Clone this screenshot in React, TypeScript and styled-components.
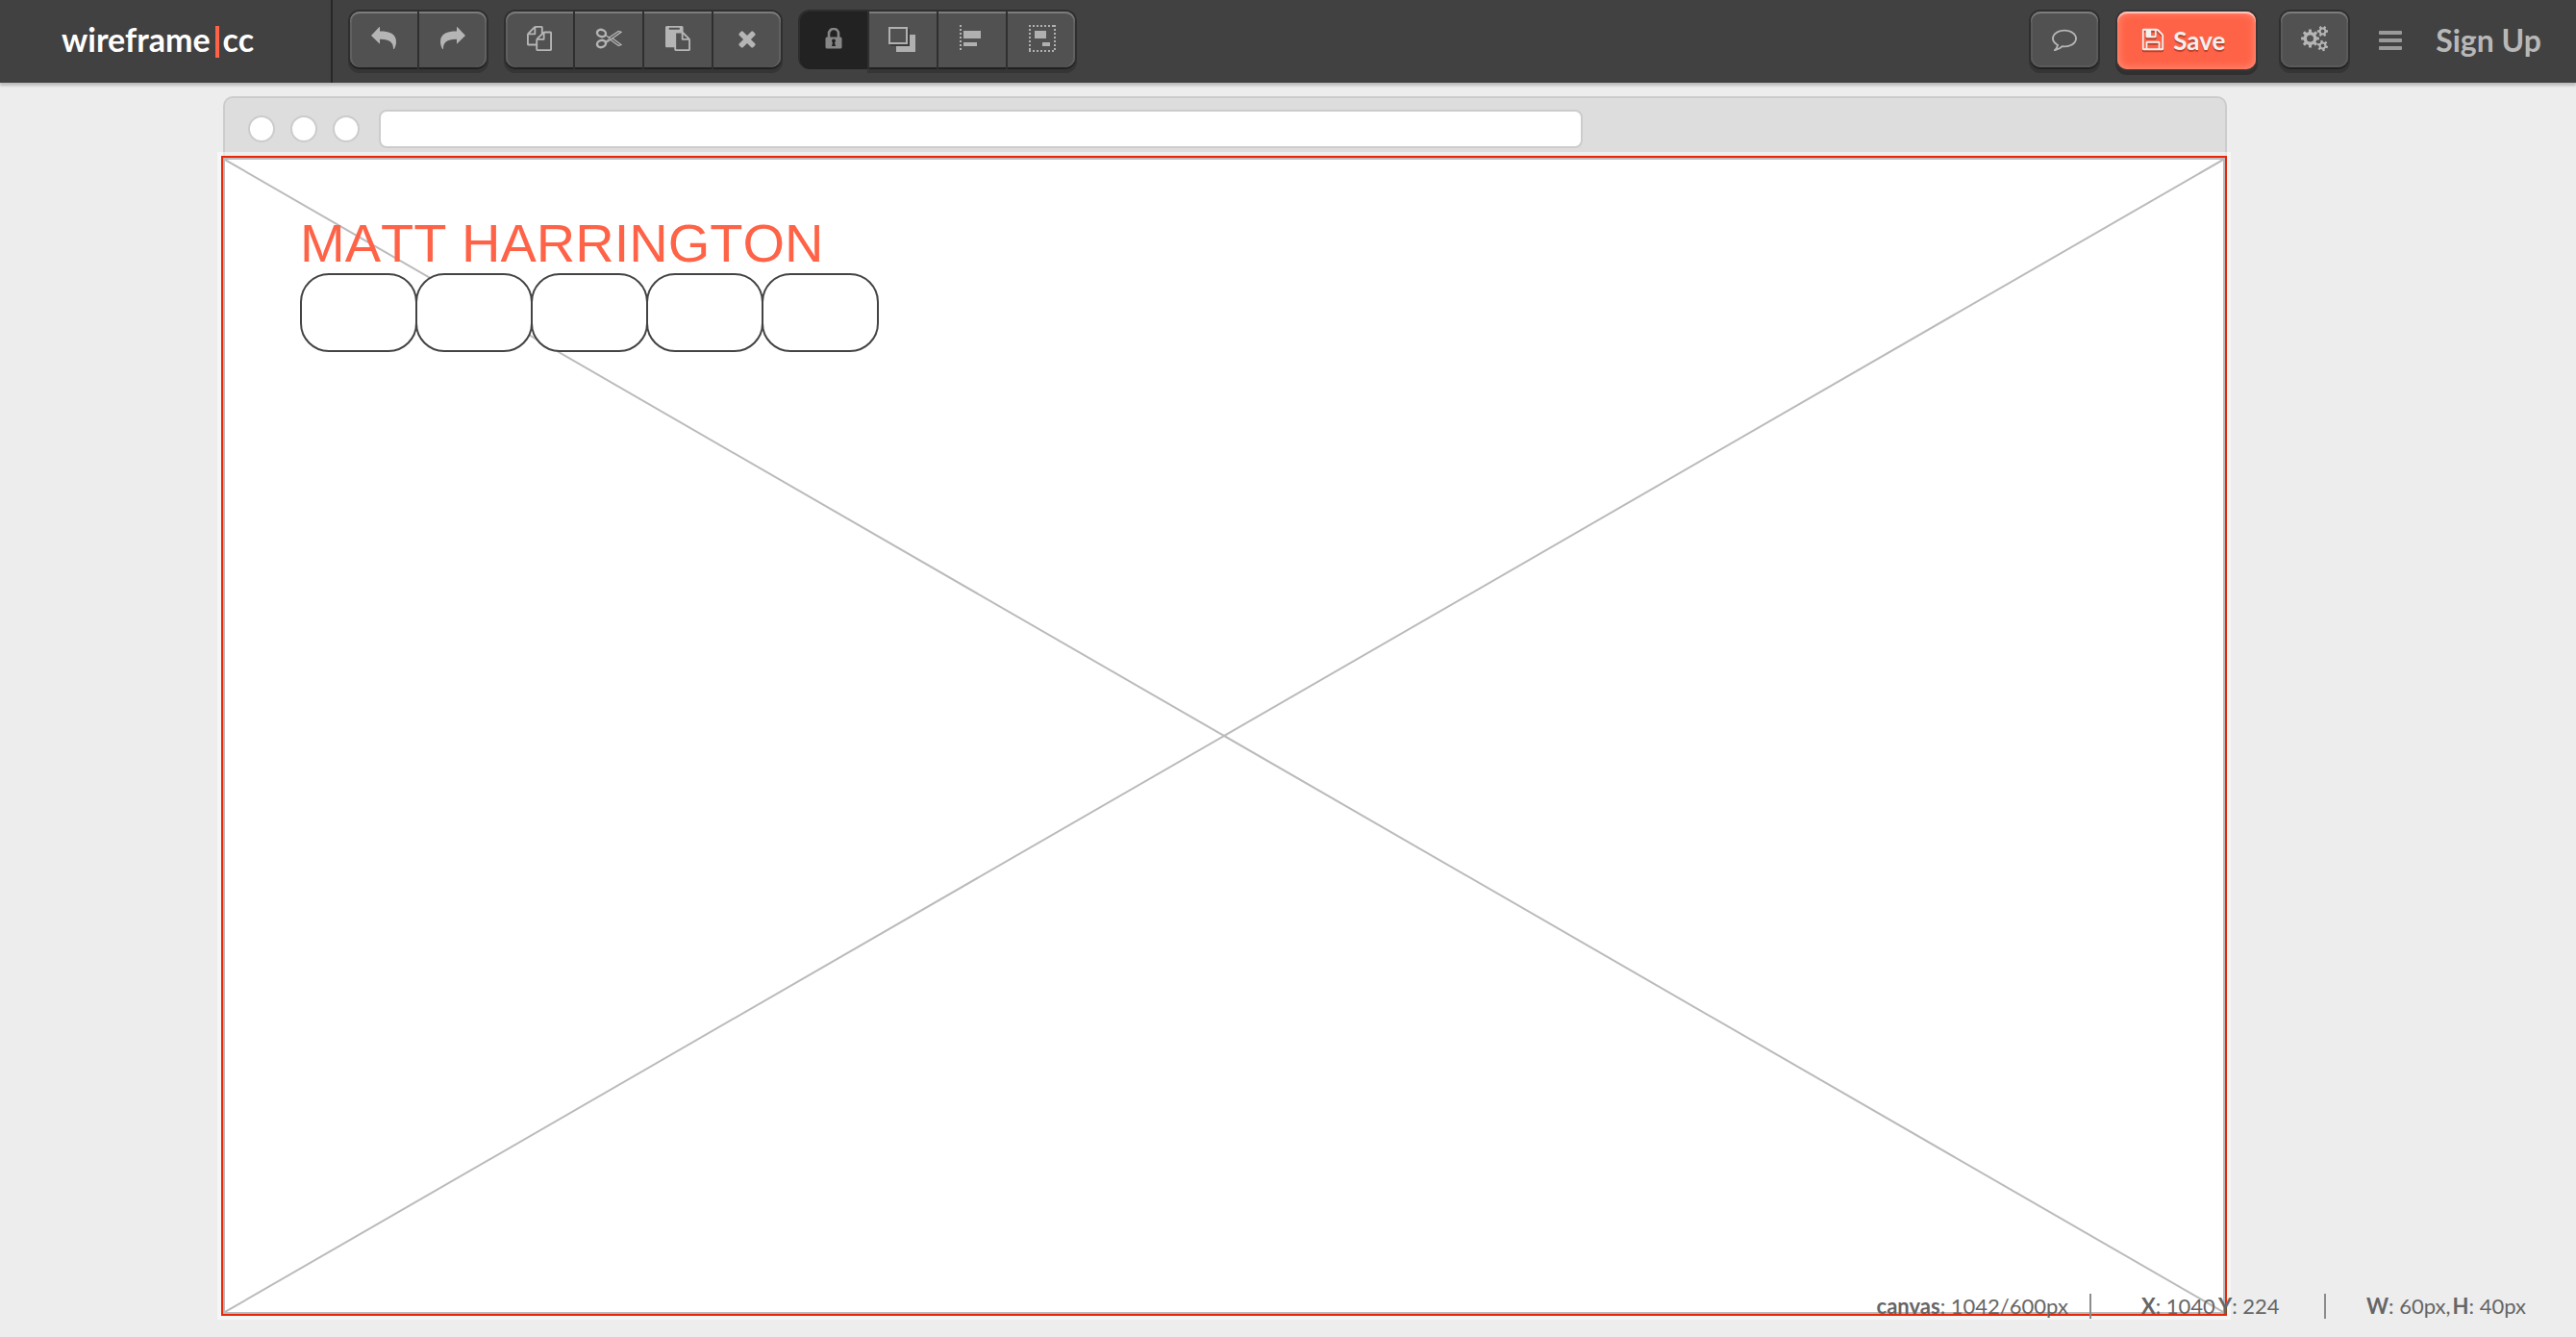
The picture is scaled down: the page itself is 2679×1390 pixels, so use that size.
import React from "react";
import styled, { createGlobalStyle, css } from "styled-components";

const GlobalStyle = createGlobalStyle`
  *, *::before, *::after { box-sizing: border-box; }
  body {
    margin: 0;
    background: #ededed;
    font-family: Lato, "Liberation Sans", sans-serif;
  }
`;

const Page = styled.div`
  position: relative;
  min-height: 100vh;
`;

const Header = styled.header`
  position: relative;
  display: flex;
  align-items: flex-start;
  height: 86px;
  background: #414141;
  box-shadow: 0 2px 2px #bcbcbc, 0 4px 2px #d4d4d4;
`;

const Brand = styled.a`
  display: flex;
  align-items: center;
  width: 346px;
  height: 86px;
  padding: 0 0 4px 64px;
  border-right: 2px solid #272727;
  color: #fff;
  font-size: 34px;
  font-weight: 700;
  line-height: 40px;
  text-decoration: none;
`;

const BrandBar = styled.span`
  width: 4px;
  height: 33px;
  margin: 4px 4px 0 5px;
  background: #ff6347;
`;

const Toolbar = styled.nav`
  display: flex;
  flex: 1;
  gap: 20px;
  padding: 12px 18px;
`;

const Group = styled.div`
  display: flex;
  gap: 2px;
`;

const Account = styled.div`
  display: flex;
  align-items: flex-start;
  padding: 12px 36px 0 0;
`;

const raisedOuter = "0 2px 0 #212121, 0 0 0 2px #2f2f2f, 0 4px 0 2px #353535";

const raised = css`
  background: #515151;
  box-shadow: inset 0 2px 0 #7c7c7c, ${raisedOuter};
`;

const pressed = css`
  background: #222;
  box-shadow: 0 2px 0 #222, 0 0 0 2px #2d2d2d;
`;

const ToolButton = styled.button<{ $active?: boolean }>`
  display: flex;
  align-items: center;
  justify-content: center;
  width: 70px;
  height: 58px;
  padding: 0 0 2px;
  border: 0;
  color: ${(p) => (p.$active ? "#868686" : "#b5b5b5")};
  ${(p) => (p.$active ? pressed : raised)}

  ${Group} > &:first-child {
    border-radius: 10px 0 0 10px;
    ${(p) =>
      !p.$active &&
      css`
        box-shadow: inset 0 2px 0 #7c7c7c, inset 2px 0 0 #606060, ${raisedOuter};
      `}
  }
  ${Group} > &:last-child {
    border-radius: 0 10px 10px 0;
    box-shadow: inset 0 2px 0 #7c7c7c, inset -2px 0 0 #606060, ${raisedOuter};
  }
  ${Account} > & {
    border-radius: 10px;
    box-shadow: inset 0 2px 0 #7c7c7c, inset 0 0 0 2px #5a5a5a, ${raisedOuter};
  }
`;

const SaveButton = styled.button`
  display: flex;
  align-items: center;
  justify-content: center;
  gap: 8px;
  width: 144px;
  height: 60px;
  margin: 0 26px 0 20px;
  padding: 0 8px 0 0;
  border: 0;
  border-radius: 10px;
  background: #ff6347;
  box-shadow: inset 0 2px 1px #ffc9bf, inset 0 0 8px 1px #ff8f7a,
    0 0 0 2px #363636, 0 4px 0 2px #303030;
  color: #f4f0ef;
  font: 700 26px/32px Lato, "Liberation Sans", sans-serif;
  text-shadow: 0 2px 1px #b8432d;

  svg {
    margin-bottom: 2px;
    filter: drop-shadow(0 2px 0 #b8432d);
  }
`;

const MenuButton = styled.button`
  display: flex;
  flex-direction: column;
  gap: 4px;
  width: 24px;
  margin: 20px 35px 0 32px;
  padding: 0;
  border: 0;
  background: none;
`;

const MenuLine = styled.span`
  height: 4px;
  border-radius: 1px;
  background: #9a9a9a;
`;

const SignUp = styled.a`
  padding-top: 10px;
  color: #b8b8b8;
  font-size: 32px;
  font-weight: 700;
  line-height: 40px;
  text-decoration: none;
`;

const Workspace = styled.main`
  padding: 14px 363px 18px 230px;
`;

const Chrome = styled.div`
  display: flex;
  align-items: center;
  height: 62px;
  margin-left: 2px;
  padding: 4px 24px 0;
  border: 2px solid #ccc;
  border-bottom: 0;
  border-radius: 10px 10px 0 0;
  background: #ddd;
`;

const Dots = styled.div`
  display: flex;
  gap: 16px;
  margin-right: 20px;
`;

const Dot = styled.span`
  width: 28px;
  height: 28px;
  border: 2px solid #ccc;
  border-radius: 50%;
  background: #fff;
`;

const AddressBar = styled.input`
  flex: 0 0 auto;
  width: 61.6%;
  height: 40px;
  padding: 0 12px;
  border: 2px solid #ccc;
  border-radius: 8px;
  background: #fff;
  font: 400 22px/32px Lato, sans-serif;
`;

const Canvas = styled.section`
  position: relative;
  min-height: 1206px;
  border: 2px solid #e8260a;
  background: #fff;
  box-shadow: 0 0 0 4px rgba(255, 255, 255, 0.5);
`;

const Cross = styled.svg`
  position: absolute;
  inset: 0;
  width: 100%;
  height: 100%;
  border: 2px solid #bbb;
`;

const NameHeading = styled.h1`
  position: absolute;
  top: 57px;
  left: 80px;
  margin: 0;
  color: #ff6347;
  font: 400 56px/64px "Liberation Sans", Arial, sans-serif;
  font-kerning: none;
  white-space: nowrap;
`;

const BoxRow = styled.div`
  position: absolute;
  top: 120px;
  left: 80px;
  display: flex;
`;

const Box = styled.div`
  width: 122px;
  height: 82px;
  border: 2px solid #444;
  border-radius: 30px;
  background: #fff;

  & + & {
    margin-left: -2px;
  }
`;

const StatusBar = styled.footer`
  position: absolute;
  right: 52px;
  bottom: 16px;
  display: flex;
  align-items: center;
  color: #666;
  font-size: 22px;
  line-height: 32px;
  white-space: nowrap;
`;

const Stat = styled.span<{ $width?: number }>`
  width: ${(p) => (p.$width ? `${p.$width}px` : "auto")};
`;

const StatPair = styled.span`
  display: flex;
  gap: 2px;
`;

const Rule = styled.span<{ $before: number; $after: number }>`
  width: 2px;
  height: 26px;
  margin: 0 ${(p) => p.$after}px 0 ${(p) => p.$before}px;
  background: #8c8c8c;
`;

type GlyphProps = { size: number; d: string };

const Glyph = ({ size, d }: GlyphProps) => (
  <svg width={size} height={size} viewBox="0 0 1792 1792" fill="currentColor" aria-hidden="true">
    <path d={d} />
  </svg>
);

const glyphs = {
  copy: "M1696 384q40 0 68 28t28 68v1216q0 40-28 68t-68 28h-960q-40 0-68-28t-28-68v-288h-544q-40 0-68-28t-28-68v-672q0-40 20-88t48-76l408-408q28-28 76-48t88-20h416q40 0 68 28t28 68v328q68-40 128-40h416zm-544 213l-299 299h299v-299zm-640-384l-299 299h299v-299zm196 647l316-316v-416h-384v416q0 40-28 68t-68 28h-416v640h512v-256q0-40 20-88t48-76zm956 804v-1152h-384v416q0 40-28 68t-68 28h-416v640h896z",
  paste: "M768 1664h896v-640h-416q-40 0-68-28t-28-68v-416h-384v1152zm256-1440v-64q0-13-9.5-22.5t-22.5-9.5h-704q-13 0-22.5 9.5t-9.5 22.5v64q0 13 9.5 22.5t22.5 9.5h704q13 0 22.5-9.5t9.5-22.5zm256 672h299l-299-299v299zm512 128v672q0 40-28 68t-68 28h-960q-40 0-68-28t-28-68v-160h-544q-40 0-68-28t-28-68v-1344q0-40 28-68t68-28h1088q40 0 68 28t28 68v328q21 13 36 28l408 408q28 28 48 76t20 88z",
  close: "M1490 1322q0 40-28 68l-136 136q-28 28-68 28t-68-28l-294-294-294 294q-28 28-68 28t-68-28l-136-136q-28-28-28-68t28-68l294-294-294-294q-28-28-28-68t28-68l136-136q28-28 68-28t68 28l294 294 294-294q28-28 68-28t68 28l136 136q28 28 28 68t-28 68l-294 294 294 294q28 28 28 68z",
  save: "M512 1536h768v-384h-768v384zm896 0h128v-896q0-14-10-38.5t-20-34.5l-281-281q-10-10-34-20t-39-10v416q0 40-28 68t-68 28h-576q-40 0-68-28t-28-68v-416h-128v1280h128v-416q0-40 28-68t68-28h832q40 0 68 28t28 68v416zm-384-928v-320q0-13-9.5-22.5t-22.5-9.5h-192q-13 0-22.5 9.5t-9.5 22.5v320q0 13 9.5 22.5t22.5 9.5h192q13 0 22.5-9.5t9.5-22.5zm640 32v928q0 40-28 68t-68 28h-1344q-40 0-68-28t-28-68v-1344q0-40 28-68t68-28h928q40 0 88 20t76 48l280 280q28 28 48 76t20 88z",
  comment: "M896 384q-204 0-381.5 69.5t-282 187.5-104.5 255q0 112 71.5 213.5t201.5 175.5l87 50-27 96q-24 91-70 172 152-63 275-171l43-38 57 6q69 8 130 8 204 0 381.5-69.5t282-187.5 104.5-255-104.5-255-282-187.5-381.5-69.5zm896 512q0 174-120 321.5t-326 233-450 85.5q-70 0-145-8-198 175-460 242-49 14-114 22h-5q-15 0-27-10.5t-16-27.5v-1q-3-4-.5-12t2-10 4.5-9.5l6-9 7-8.5 8-9q7-8 31-34.5t34.5-38 31-39.5 32.5-51 27-59 26-76q-157-89-247.5-220t-90.5-281q0-130 71-248.5t191-204.5 286-136.5 348-50.5 348 50.5 286 136.5 191 204.5 71 248.5z",
};

const ReplyIcon = ({ flip }: { flip?: boolean }) => (
  <svg width="28" height="28" viewBox="0 0 28 28" fill="currentColor" aria-hidden="true">
    <path
      transform={flip ? "matrix(-1 0 0 1 28 0)" : undefined}
      d="M1 11 L9.5 2 Q10 1.700 10 2.500 V6.500 C20 6.500 27 9 27 17.500 C27 20.500 26 23 25 24.700 Q24.200 25.600 24 24.500 C24 18 20 14.500 10 14.700 V19 Q10 19.800 9.500 19.300 Z"
    />
  </svg>
);

const ScissorsIcon = () => (
  <svg width="28" height="24" viewBox="0 0 28 24" fill="none" stroke="currentColor" aria-hidden="true">
    <ellipse cx="6.500" cy="6.500" rx="4.600" ry="3.600" transform="rotate(18 6.500 6.500)" strokeWidth="2.400" />
    <ellipse cx="6.500" cy="17.500" rx="4.600" ry="3.600" transform="rotate(-18 6.500 17.500)" strokeWidth="2.400" />
    <path d="M10.500 8.500 L14.500 11 L24.300 4.500 L27 5.300 L12 16" strokeWidth="1.300" />
    <path d="M10.500 15.500 L14 13.200 M16 13.500 L24.300 19.500 L27 18.500 L17.500 11.500" strokeWidth="1.300" />
    <circle cx="14.800" cy="12.300" r="1" strokeWidth="1" />
  </svg>
);

const LockIcon = () => (
  <svg width="18" height="22" viewBox="0 0 18 22" aria-hidden="true">
    <path d="M4 11 V6 a5 5 0 0 1 10 0 V11" fill="none" stroke="currentColor" strokeWidth="2.600" />
    <rect x="0.500" y="9.500" width="17" height="12" rx="1.500" fill="currentColor" />
    <circle cx="9" cy="13.500" r="2" fill="#222" />
    <path d="M8.300 14 H9.700 L11 19 H7 Z" fill="#222" />
  </svg>
);

const LayersIcon = () => (
  <svg width="30" height="28" viewBox="0 -2 30 28" aria-hidden="true">
    <path d="M8 8 H28 V26 H8 Z" fill="#b0b0b0" />
    <path d="M2 2 H22 V20 H2 Z" fill="#3c3c3c" />
    <rect x="1" y="1" width="18" height="16" fill="#515151" stroke="#b0b0b0" strokeWidth="2" />
  </svg>
);

const AlignIcon = () => (
  <svg width="26" height="28" viewBox="0 0 26 28" fill="#b0b0b0" aria-hidden="true">
    <path d="M1 0 V28" stroke="#b0b0b0" strokeWidth="2" strokeDasharray="2 2" />
    <rect x="4" y="6" width="18" height="8" />
    <rect x="4" y="18" width="14" height="4" />
  </svg>
);

const DistributeIcon = () => (
  <svg width="30" height="28" viewBox="-2 0 30 28" fill="#b0b0b0" aria-hidden="true">
    <path
      d="M0 1 H28 M0 27 H28 M1 0 V28 M27 0 V28"
      stroke="#b0b0b0"
      strokeWidth="2"
      strokeDasharray="2 2"
    />
    <rect x="6" y="6" width="12" height="8" />
    <rect x="14" y="18" width="8" height="4" />
  </svg>
);

/** Closed outline of a cog with square teeth and a round hole. */
const gear = (cx: number, cy: number, outer: number, inner: number, hole: number, teeth: number, phase = 0) => {
  const step = (Math.PI * 2) / teeth;
  const at = (r: number, a: number) =>
    `${(cx + r * Math.cos(a)).toFixed(2)} ${(cy + r * Math.sin(a)).toFixed(2)}`;
  const points: string[] = [];
  for (let i = 0; i < teeth; i++) {
    const a = i * step + phase;
    points.push(at(inner, a - step * 0.28), at(outer, a - step * 0.2), at(outer, a + step * 0.2), at(inner, a + step * 0.28));
  }
  return `M${points.join("L")}Z M${cx - hole} ${cy} a${hole} ${hole} 0 1 0 ${hole * 2} 0 a${hole} ${hole} 0 1 0 ${-hole * 2} 0Z`;
};

const CogsIcon = () => (
  <svg width="28" height="28" viewBox="0 0 28 28" fill="currentColor" fillRule="evenodd" aria-hidden="true">
    <path d={gear(9.5, 14, 9.5, 7, 3.5, 8)} />
    <path d={gear(22.5, 6.5, 5.7, 4, 1.9, 6)} />
    <path d={gear(22.5, 21.5, 5.7, 4, 1.9, 6, 0.3)} />
  </svg>
);

export default function App() {
  return (
    <Page>
      <GlobalStyle />
      <Header>
        <Brand href="#">
          wireframe
          <BrandBar />
          cc
        </Brand>
        <Toolbar aria-label="Editing tools">
          <Group>
            <ToolButton aria-label="Undo"><ReplyIcon /></ToolButton>
            <ToolButton aria-label="Redo"><ReplyIcon flip /></ToolButton>
          </Group>
          <Group>
            <ToolButton aria-label="Copy"><Glyph size={26} d={glyphs.copy} /></ToolButton>
            <ToolButton aria-label="Cut"><ScissorsIcon /></ToolButton>
            <ToolButton aria-label="Paste"><Glyph size={26} d={glyphs.paste} /></ToolButton>
            <ToolButton aria-label="Delete"><Glyph size={26} d={glyphs.close} /></ToolButton>
          </Group>
          <Group>
            <ToolButton aria-label="Lock" $active><LockIcon /></ToolButton>
            <ToolButton aria-label="Arrange"><LayersIcon /></ToolButton>
            <ToolButton aria-label="Align"><AlignIcon /></ToolButton>
            <ToolButton aria-label="Group"><DistributeIcon /></ToolButton>
          </Group>
        </Toolbar>
        <Account>
          <ToolButton aria-label="Comments"><Glyph size={26} d={glyphs.comment} /></ToolButton>
          <SaveButton>
            <Glyph size={26} d={glyphs.save} />
            Save
          </SaveButton>
          <ToolButton aria-label="Settings"><CogsIcon /></ToolButton>
          <MenuButton aria-label="Menu">
            <MenuLine />
            <MenuLine />
            <MenuLine />
          </MenuButton>
          <SignUp href="#">Sign Up</SignUp>
        </Account>
      </Header>

      <Workspace>
        <Chrome>
          <Dots>
            <Dot />
            <Dot />
            <Dot />
          </Dots>
          <AddressBar type="text" aria-label="Address" />
        </Chrome>
        <Canvas>
          <Cross viewBox="0 0 2078 1198" preserveAspectRatio="none" aria-hidden="true">
            <path d="M0 0 L2078 1198 M2078 0 L0 1198" stroke="#bbb" strokeWidth="2" />
          </Cross>
          <NameHeading>MATT HARRINGTON</NameHeading>
          <BoxRow>
            {[0, 1, 2, 3, 4].map((n) => (
              <Box key={n} />
            ))}
          </BoxRow>
        </Canvas>
      </Workspace>

      <StatusBar>
        <Stat><b>canvas</b>: 1042/600px</Stat>
        <Rule $before={22} $after={52} />
        <Stat $width={80}><b>X</b>: 1040</Stat>
        <Stat $width={62}><b>Y</b>: 224</Stat>
        <Rule $before={48} $after={42} />
        <StatPair>
          <Stat><b>W</b>: 60px,</Stat>
          <Stat><b>H</b>: 40px</Stat>
        </StatPair>
      </StatusBar>
    </Page>
  );
}
